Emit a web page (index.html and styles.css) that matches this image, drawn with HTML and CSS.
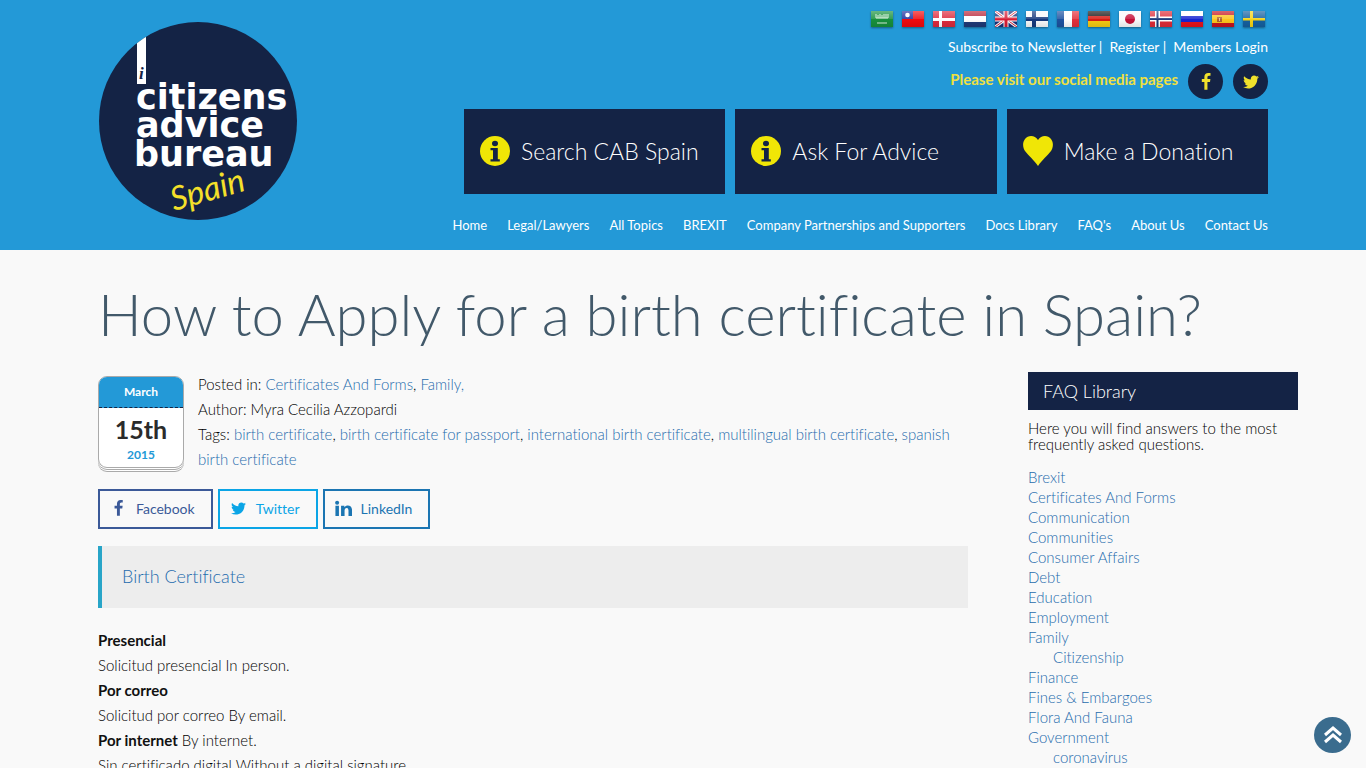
FILE: index.html
```html
<!DOCTYPE html>
<html lang="en">
<head>
<meta charset="utf-8">
<meta name="viewport" content="width=device-width, initial-scale=1">
<title>How to Apply for a birth certificate in Spain?</title>
<link rel="stylesheet" href="styles.css">
</head>
<body>
<svg class="defs" aria-hidden="true">
  <defs>
    <linearGradient id="shine" x1="0" y1="0" x2="0" y2="1">
      <stop offset="0" stop-color="#fff" stop-opacity=".35"/><stop offset=".5" stop-color="#fff" stop-opacity=".12"/><stop offset=".52" stop-color="#000" stop-opacity="0"/><stop offset="1" stop-color="#000" stop-opacity=".1"/>
    </linearGradient>
    <symbol id="bird" viewBox="0 0 1792 1792"><path d="M1684 408q-67 98-162 167 1 14 1 42 0 130-38 259.500t-115.500 248.500-184.500 210.500-258 146-323 54.500q-271 0-496-145 35 4 78 4 225 0 401-138-105-2-188-64.500t-114-159.500q33 5 61 5 43 0 85-11-112-23-185.500-111.500t-73.500-205.500v-4q68 38 146 41-66-44-105-115t-39-154q0-88 44-163 121 149 294.500 238.500t371.500 99.500q-8-38-8-74 0-134 94.500-228.500t228.500-94.500q140 0 236 102 109-21 205-78-37 115-142 178 93-10 186-50z"/></symbol>
    <symbol id="fb" viewBox="0 0 1792 1792"><path d="M1343 12v264h-157q-86 0-116 36t-30 108v189h293l-39 296h-254v759h-306v-759h-255v-296h255v-218q0-186 104-288.500t277-102.500q147 0 228 12z"/></symbol>
    <symbol id="info" viewBox="0 0 30 30"><circle cx="15" cy="15" r="15" fill="#f0e606"/><ellipse cx="15" cy="7.500" rx="3" ry="2.700" fill="#142345"/><path d="M10.500 12h7.300v11.300h2v2.200h-9.300v-2.200h2.500v-9h-2.500z" fill="#142345"/></symbol>
  </defs>
</svg>
<header class="site-header">
  <div class="container header-row">
    <a class="logo" href="#" aria-label="Citizens Advice Bureau Spain">
      <svg viewBox="0 0 200 200">
        <clipPath id="disc"><circle cx="100" cy="100" r="99"/></clipPath>
        <circle cx="100" cy="100" r="99" fill="#142345"/>
        <rect x="39" y="10" width="9" height="53" fill="#fff" clip-path="url(#disc)"/>
        <text class="logo-i" x="41" y="58">i</text>
        <text class="logo-word" x="38" y="88">citizens</text>
        <text class="logo-word" x="38" y="116">advice</text>
        <text class="logo-word" x="36" y="145">bureau</text>
        <text class="logo-script" x="0" y="0" transform="translate(76 190) rotate(-16)">Spain</text>
      </svg>
    </a>
    <div class="header-main">
      <div class="flags">
        <a href="#" aria-label="Arabic"><svg viewBox="0 0 22 16"><path fill="#17903c" d="M0 0h22v16H0z"/><path stroke="#d9f0dd" stroke-width="1" d="M5 3v4M7 4v3M9 3v4M11 4v3M13 3v4M15 3v4M17 3v4M5 7h12M6 12h10"/><path fill="url(#shine)" d="M0 0h22v16H0z"/></svg></a>
        <a href="#" aria-label="Taiwanese"><svg viewBox="0 0 22 16"><path fill="#f00a0e" d="M0 0h22v16H0z"/><path fill="#1b2f9e" d="M0 0h11v8H0z"/><circle cx="5.500" cy="4" r="2.300" fill="#fff"/><path fill="url(#shine)" d="M0 0h22v16H0z"/></svg></a>
        <a href="#" aria-label="Danish"><svg viewBox="0 0 22 16"><path fill="#dc2a3c" d="M0 0h22v16H0z"/><path fill="#fff" d="M6 0h3v16H6zM0 7h22v3H0z"/><path fill="url(#shine)" d="M0 0h22v16H0z"/></svg></a>
        <a href="#" aria-label="Dutch"><svg viewBox="0 0 22 16"><path fill="#b82638" d="M0 0h22v5H0z"/><path fill="#fff" d="M0 5h22v6H0z"/><path fill="#203a78" d="M0 11h22v5H0z"/><path fill="url(#shine)" d="M0 0h22v16H0z"/></svg></a>
        <a href="#" aria-label="English"><svg viewBox="0 0 22 16"><path fill="#1c2f78" d="M0 0h22v16H0z"/><path stroke="#fff" stroke-width="3" d="M0 0l22 16M22 0L0 16"/><path stroke="#d81c34" d="M0 0l22 16M22 0L0 16"/><path fill="#fff" d="M8.500 0h5v16h-5zM0 5.500h22v5H0z"/><path fill="#d81c34" d="M9.500 0h3v16h-3zM0 6.500h22v3H0z"/><path fill="url(#shine)" d="M0 0h22v16H0z"/></svg></a>
        <a href="#" aria-label="Finnish"><svg viewBox="0 0 22 16"><path fill="#f8f9fa" d="M0 0h22v16H0z"/><path fill="#16397c" d="M6 0h4v16H6zM0 6h22v4H0z"/><path fill="url(#shine)" d="M0 0h22v16H0z"/></svg></a>
        <a href="#" aria-label="French"><svg viewBox="0 0 22 16"><path fill="#1d52a0" d="M0 0h7v16H0z"/><path fill="#fff" d="M7 0h8v16H7z"/><path fill="#e32f3a" d="M15 0h7v16h-7z"/><path fill="url(#shine)" d="M0 0h22v16H0z"/></svg></a>
        <a href="#" aria-label="German"><svg viewBox="0 0 22 16"><path fill="#151515" d="M0 0h22v5H0z"/><path fill="#d91b12" d="M0 5h22v5H0z"/><path fill="#f6ca12" d="M0 10h22v6H0z"/><path fill="url(#shine)" d="M0 0h22v16H0z"/></svg></a>
        <a href="#" aria-label="Japanese"><svg viewBox="0 0 22 16"><path fill="#fafafa" d="M0 0h22v16H0z"/><circle cx="11" cy="8" r="5" fill="#c40f36"/><path fill="url(#shine)" d="M0 0h22v16H0z"/></svg></a>
        <a href="#" aria-label="Norwegian"><svg viewBox="0 0 22 16"><path fill="#de2b38" d="M0 0h22v16H0z"/><path fill="#fff" d="M5 0h5v16H5zM0 5.500h22v5H0z"/><path fill="#1b3a7c" d="M6.500 0h2v16h-2zM0 7h22v2H0z"/><path fill="url(#shine)" d="M0 0h22v16H0z"/></svg></a>
        <a href="#" aria-label="Russian"><svg viewBox="0 0 22 16"><path fill="#fff" d="M0 0h22v5H0z"/><path fill="#1624d0" d="M0 5h22v6H0z"/><path fill="#e8131a" d="M0 11h22v5H0z"/><path fill="url(#shine)" d="M0 0h22v16H0z"/></svg></a>
        <a href="#" aria-label="Spanish"><svg viewBox="0 0 22 16"><path fill="#c5141f" d="M0 0h22v16H0z"/><path fill="#fcc51c" d="M0 4h22v8H0z"/><path fill="#b0642f" d="M5 6h5v5H5z"/><path fill="#e5c7a0" d="M7 7h1v3H7z"/><path fill="url(#shine)" d="M0 0h22v16H0z"/></svg></a>
        <a href="#" aria-label="Swedish"><svg viewBox="0 0 22 16"><path fill="#1560a0" d="M0 0h22v16H0z"/><path fill="#f5d316" d="M7 0h3v16H7zM0 7h22v2.500H0z"/><path fill="url(#shine)" d="M0 0h22v16H0z"/></svg></a>
      </div>
      <div class="account"><a href="#">Subscribe to Newsletter</a> |&nbsp; <a href="#">Register</a> |&nbsp; <a href="#">Members Login</a></div>
      <div class="social">
        <strong>Please visit our social media pages</strong>
        <a class="round" href="#" aria-label="Facebook"><svg class="round-fb"><use href="#fb"/></svg></a>
        <a class="round" href="#" aria-label="Twitter"><svg class="round-tw"><use href="#bird"/></svg></a>
      </div>
      <div class="actions">
        <a href="#"><svg viewBox="0 0 30 30"><use href="#info"/></svg>Search CAB Spain</a>
        <a href="#"><svg viewBox="0 0 30 30"><use href="#info"/></svg>Ask For Advice</a>
        <a href="#"><svg viewBox="0 0 30 30"><path fill="#f0e606" d="M15 4C12-1 5-1 2 3c-3 4-2 9 0 12 3 4 9 9 13 15 4-6 10-11 13-15 2-3 3-8 0-12-3-4-10-4-13 1z"/></svg>Make a Donation</a>
      </div>
      <nav class="nav">
        <a href="#">Home</a><a href="#">Legal/Lawyers</a><a href="#">All Topics</a><a href="#">BREXIT</a><a href="#">Company Partnerships and Supporters</a><a href="#">Docs Library</a><a href="#">FAQ's</a><a href="#">About Us</a><a href="#">Contact Us</a>
      </nav>
    </div>
  </div>
</header>
<main class="container">
  <h1>How to Apply for a birth certificate in Spain?</h1>
  <div class="columns">
    <article>
      <div class="meta">
        <time class="calendar" datetime="2015-03-15">
          <span class="month">March</span><span class="day">15th</span><span class="year">2015</span>
        </time>
        <div class="meta-text">
          <p>Posted in: <a href="#">Certificates And Forms</a>, <a href="#">Family,</a></p>
          <p>Author: Myra Cecilia Azzopardi</p>
          <p>Tags: <a href="#">birth certificate</a>, <a href="#">birth certificate for passport</a>, <a href="#">international birth certificate</a>, <a href="#">multilingual birth certificate</a>, <a href="#">spanish birth certificate</a></p>
        </div>
      </div>
      <div class="share">
        <a class="facebook" href="#"><svg><use href="#fb"/></svg>Facebook</a>
        <a class="twitter" href="#"><svg><use href="#bird"/></svg>Twitter</a>
        <a class="linkedin" href="#"><svg viewBox="0 0 16 16"><circle cx="2" cy="2.500" r="1.900"/><path d="M.4 5.500h3.300V15H.4zM5.700 5.500h3.100v1.300C10.800 4.200 16 4.700 16 9.300V15h-3.300V9.900c0-3.300-3.700-3-3.700 0V15H5.700z"/></svg>LinkedIn</a>
      </div>
      <blockquote><a href="#">Birth Certificate</a></blockquote>
      <div class="body-text">
        <p><strong>Presencial</strong></p>
        <p>Solicitud presencial In person.</p>
        <p><strong>Por correo</strong></p>
        <p>Solicitud por correo By email.</p>
        <p><strong>Por internet</strong> By internet.</p>
        <p>Sin certificado digital Without a digital signature.</p>
      </div>
    </article>
    <aside>
      <h2>FAQ Library</h2>
      <p>Here you will find answers to the most frequently asked questions.</p>
      <ul>
        <li><a href="#">Brexit</a></li>
        <li><a href="#">Certificates And Forms</a></li>
        <li><a href="#">Communication</a></li>
        <li><a href="#">Communities</a></li>
        <li><a href="#">Consumer Affairs</a></li>
        <li><a href="#">Debt</a></li>
        <li><a href="#">Education</a></li>
        <li><a href="#">Employment</a></li>
        <li><a href="#">Family</a>
          <ul><li><a href="#">Citizenship</a></li></ul></li>
        <li><a href="#">Finance</a></li>
        <li><a href="#">Fines &amp; Embargoes</a></li>
        <li><a href="#">Flora And Fauna</a></li>
        <li><a href="#">Government</a>
          <ul><li><a href="#">coronavirus</a></li></ul></li>
      </ul>
    </aside>
  </div>
</main>
<a class="to-top" href="#" aria-label="Back to top"><svg viewBox="0 0 20 20"><path d="M2 10l8-7 8 7M2 17l8-7 8 7"/></svg></a>
</body>
</html>
```

FILE: styles.css
```css
* { box-sizing: border-box; }
html { overflow-x: hidden; scrollbar-width: none; }
body { margin: 0; background: #f9f9f9; color: #000; font: 300 15px/25px Lato, sans-serif; font-variant-ligatures: no-common-ligatures; }
a { color: #1f6cad; text-decoration: none; }
p, h1, h2, ul { margin: 0; padding: 0; }
ul { list-style: none; }
strong { font-weight: 700; color: #111; }
.defs { position: absolute; width: 0; height: 0; }
.container { max-width: 1200px; margin: 0 auto; padding: 0 15px; }

.site-header { background: #2399d7; padding-bottom: 15px; }
.site-header a { color: #fff; }
.header-row { display: flex; justify-content: space-between; align-items: flex-start; }
.logo { margin-top: 21px; }
.logo svg { display: block; width: 200px; height: 200px; }
.logo text { fill: #fff; }
.logo .logo-word { font: bold 35px "DejaVu Sans", sans-serif; }
.logo .logo-i { font: italic bold 17px "Liberation Serif", serif; fill: #142345; }
.logo .logo-script { font: italic 400 33px Lato, sans-serif; fill: #f5e02a; }
.header-main { display: flex; flex-direction: column; align-items: flex-end; padding-top: 11px; }
.flags { display: flex; gap: 9px; padding-right: 3px; }
.flags svg { display: block; width: 22px; height: 16px; box-shadow: 0 1px 2px rgba(0, 0, 0, .4); }
.account { margin-top: 10px; font-size: 14px; line-height: 20px; color: #fff; }
.social { display: flex; align-items: center; gap: 10px; margin-top: 7px; line-height: 30px; }
.social strong { padding-bottom: 5px; color: #f0e040; }
.round { display: grid; place-items: center; width: 35px; height: 35px; border-radius: 50%; background: #142345; fill: #f0e12c; }
.round-fb { width: 18px; height: 18px; }
.round-tw { width: 18px; height: 18px; }
.actions { display: grid; grid-template-columns: repeat(3, 1fr); gap: 10px; width: 804px; margin-top: 10px; }
.actions a { display: flex; align-items: center; gap: 11px; height: 85px; padding: 0 16px 2px; background: #142345; font-size: 23px; line-height: 30px; }
.actions svg { width: 30px; height: 30px; }
.nav { display: flex; gap: 20px; margin-top: 21px; font-size: 13px; line-height: 20px; }
.account, .nav { font-weight: 400; }

h1 { margin-top: 30px; color: #42596a; font-size: 58px; line-height: 68px; font-weight: 300; }
.columns { display: grid; grid-template-columns: 29fr 9fr; gap: 60px; margin: 24px -30px 0 0; }
.meta { display: flex; gap: 14px; }
.calendar { flex: none; display: flex; flex-direction: column; align-items: center; align-self: flex-start; width: 86px; height: 92px; margin-top: 4px; border: 1px solid #aaa; border-radius: 9px; background: #fff; box-shadow: 0 1px #fff, 0 2px #aaa, 0 3px #fff, 0 4px #aaa; font-weight: 700; }
.month { align-self: stretch; height: 31px; border-bottom: 1px dashed #142345; border-radius: 8px 8px 0 0; background: #2399d7; color: #fff; font-size: 12px; line-height: 30px; text-align: center; }
.day { color: #2b2b2b; font-size: 25px; line-height: 42px; }
.year { color: #2399d7; font-size: 12px; line-height: 10px; }
.share { display: flex; gap: 5px; margin-top: 17px; font-size: 14px; font-weight: 400; }
.share a { display: flex; align-items: center; gap: 9px; height: 40px; padding: 0 16px 1px 10px; border: 2px solid; }
.share svg { width: 17px; height: 17px; fill: currentColor; }
.share .facebook { color: #3b5998; }
.share .twitter { color: #0ba5e6; }
.share .linkedin { color: #1b75b2; }
blockquote { margin: 17px 0 20px; padding: 18px 20px 19px; border-left: 4px solid #28a5c8; background: #ededed; font-size: 18px; }

aside h2 { padding: 0 15px; background: #142345; color: #fff; font-size: 18px; line-height: 38px; font-weight: 300; }
aside p { margin: 10px 0 15px; line-height: 16px; }
aside li { line-height: 20px; }
aside ul ul { padding-left: 25px; }
.to-top { position: fixed; right: 15px; bottom: 15px; display: grid; place-items: center; width: 37px; height: 36px; border-radius: 50%; background: #3a6c8e; }
.to-top svg { width: 20px; height: 20px; fill: none; stroke: #fff; stroke-width: 3; }
```
